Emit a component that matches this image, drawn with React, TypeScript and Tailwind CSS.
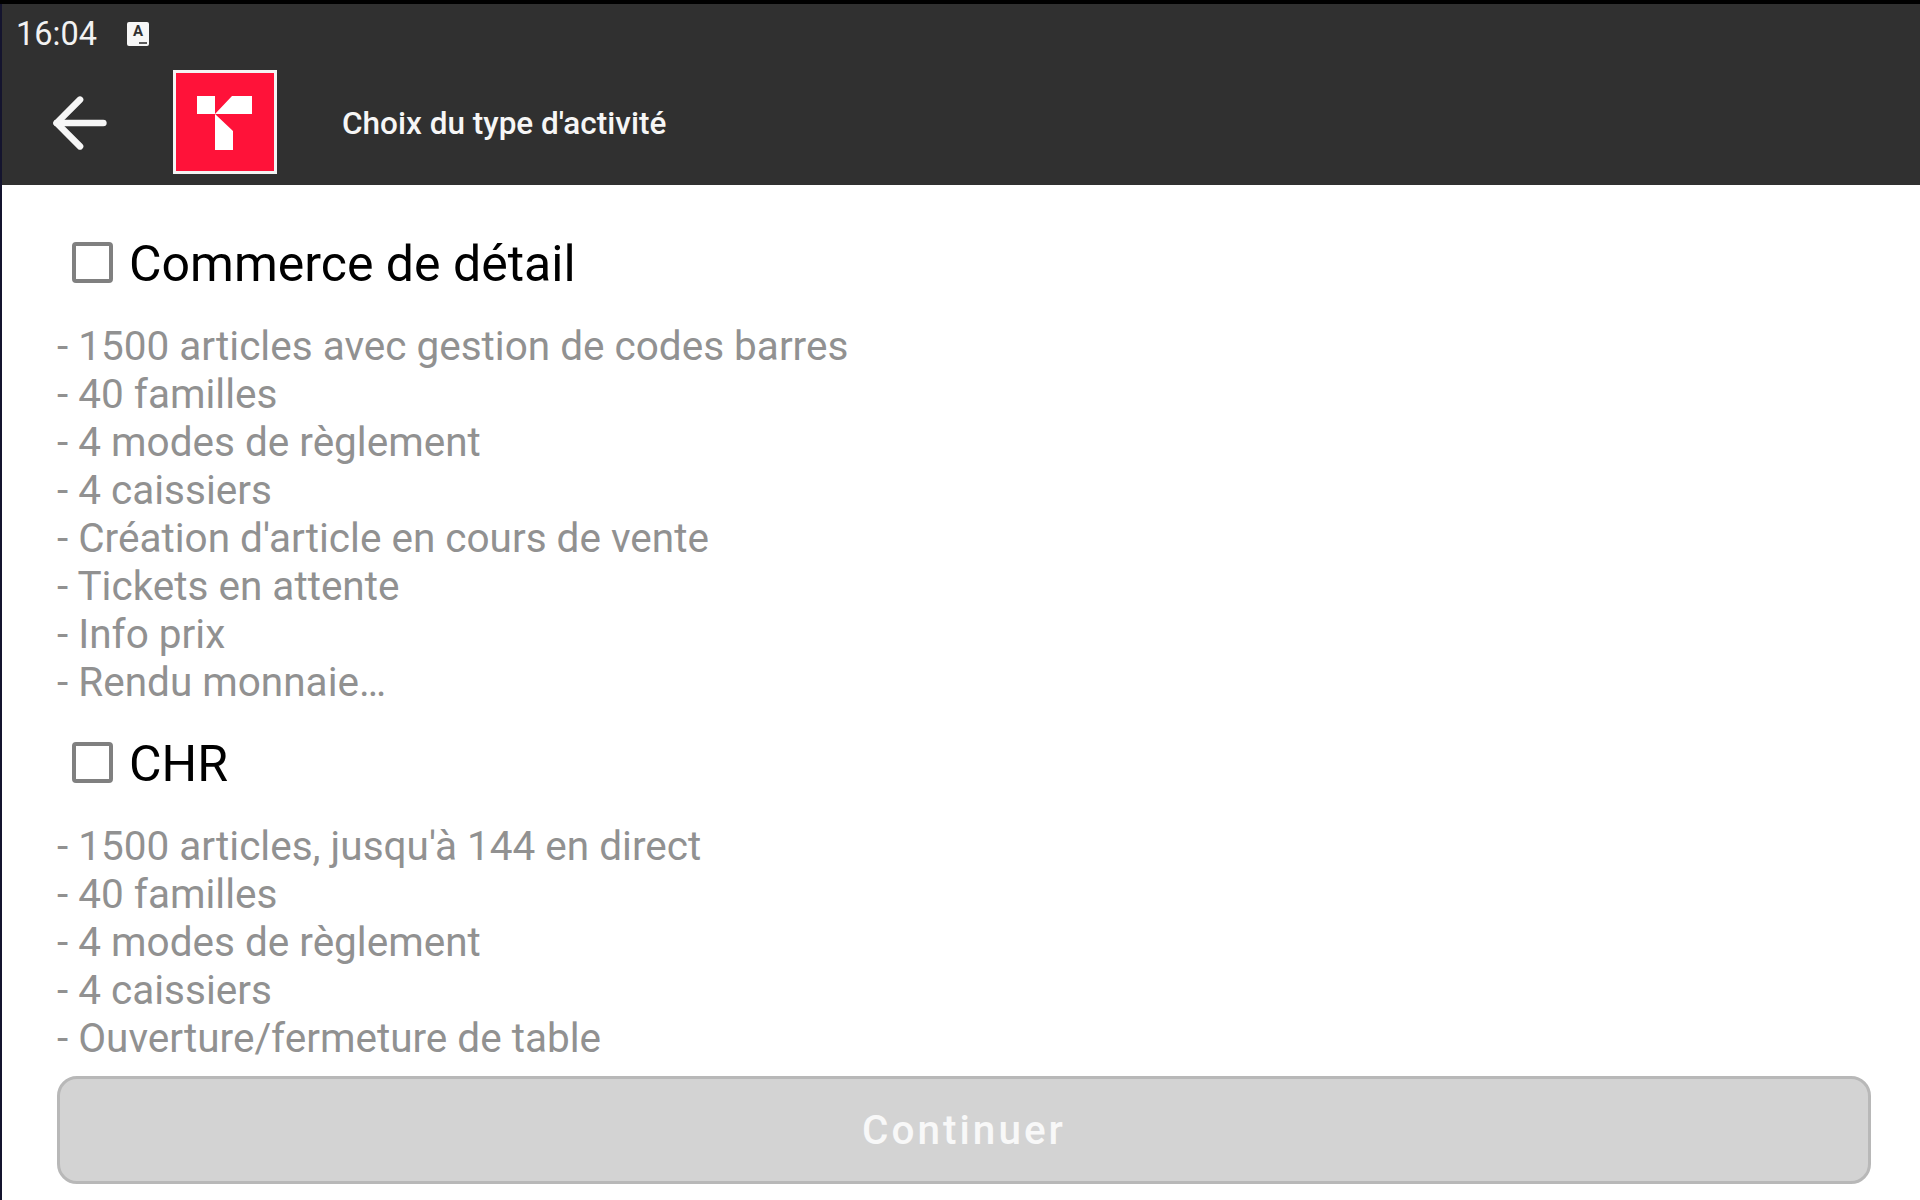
import { ArrowLeft } from 'lucide-react';

const commerce = [
    '- 1500 articles avec gestion de codes barres',
    '- 40 familles',
    '- 4 modes de règlement',
    '- 4 caissiers',
    "- Création d'article en cours de vente",
    '- Tickets en attente',
    '- Info prix',
    '- Rendu monnaie…',
];

const chr = [
    "- 1500 articles, jusqu'à 144 en direct",
    '- 40 familles',
    '- 4 modes de règlement',
    '- 4 caissiers',
    '- Ouverture/fermeture de table',
];

function Logo() {
    return (
        <div className="ml-[53px] h-[104px] w-[104px] shrink-0 border-[3px] border-[#f4f4f4] bg-[#ff1239]">
            <svg viewBox="176 72 98 98" className="h-full w-full">
                <path
                    d="M197 95h18v18h-18z M215 113l17-18h20v18z M215 113l18 17v19h-18z"
                    fill="#fff"
                />
            </svg>
        </div>
    );
}

function KeyboardBadge() {
    return (
        <div className="relative ml-[30px] flex h-[24px] w-[22px] items-start justify-center rounded-[2px] bg-[#f6f6f6]">
            <span className="text-[15px] leading-[19px] font-bold text-[#303030]">A</span>
            <span className="absolute right-[2px] bottom-[2px] h-[2px] w-[8px] bg-[#5a5a5a]" />
        </div>
    );
}

function Section({ label, items }: { label: string; items: string[] }) {
    return (
        <div>
            <div className="flex h-[72px] items-center pl-[15px]">
                <div className="mb-[2px] h-[41px] w-[41px] rounded-[4px] border-[4px] border-[#808080]" />
                <span className="relative top-[1px] ml-[16px] text-[50px] leading-[56px] text-black">{label}</span>
            </div>
            <div className="mt-[23px]">
                {items.map((item, i) => (
                    <div key={i} className="h-[48px] text-[40.5px] leading-[48px] text-[#919191]">
                        {item}
                    </div>
                ))}
            </div>
        </div>
    );
}

export default function App() {
    return (
        <div className="flex h-[1200px] w-[1920px] flex-col overflow-hidden bg-white font-['Roboto',sans-serif]">
            <div className="h-[4px] shrink-0 bg-black" />
            <div className="flex min-h-0 flex-1">
                <div className="w-[2px] shrink-0 bg-[#14142e]" />
                <div className="flex min-w-0 flex-1 flex-col">
                    <header className="h-[181px] shrink-0 bg-[#303030]">
                        <div className="flex h-[60px] items-center pl-[14px]">
                            <span className="text-[32.5px] leading-[40px] text-[#f2f2f2]">16:04</span>
                            <KeyboardBadge />
                        </div>
                        <div className="flex h-[116px] items-center pl-[38px]">
                            <ArrowLeft className="mt-[2px] h-[80px] w-[80px] text-[#f6f6f6]" strokeWidth={2} />
                            <Logo />
                            <span className="mt-[4px] ml-[65px] text-[31.5px] font-medium text-[#f6f6f6]">
                                Choix du type d'activité
                            </span>
                        </div>
                    </header>
                    <main className="flex flex-1 flex-col px-[55px] pt-[42px]">
                        <Section label="Commerce de détail" items={commerce} />
                        <div className="mt-[21px]">
                            <Section label="CHR" items={chr} />
                        </div>
                        <button className="mt-[14px] h-[108px] w-[1814px] rounded-[20px] border-[3px] border-[#b8b8b8] bg-[#d3d3d3] text-[40.5px] font-medium tracking-[3px] text-[#f8f8f8]">
                            Continuer
                        </button>
                    </main>
                </div>
            </div>
        </div>
    );
}
